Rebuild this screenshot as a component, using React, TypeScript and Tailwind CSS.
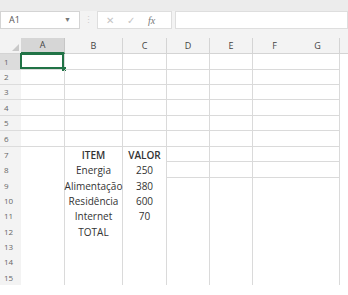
const cols = ['A', 'B', 'C', 'D', 'E', 'F', 'G'];
const colW = [44, 58, 44, 43, 43, 43, 44];
const rowH = [16, 15, 15, 16, 15, 16, 15, 16, 15, 15, 16, 15, 15, 16, 15];

const data: Record<string, { text: string; bold?: boolean }> = {
  B7: { text: 'ITEM', bold: true },
  C7: { text: 'VALOR', bold: true },
  B8: { text: 'Energia' },
  C8: { text: '250' },
  B9: { text: 'Alimentação' },
  C9: { text: '380' },
  B10: { text: 'Residência' },
  C10: { text: '600' },
  B11: { text: 'Internet' },
  C11: { text: '70' },
  B12: { text: 'TOTAL' },
};

function hasBottom(ci: number, row: number): boolean {
  if (ci < 3) return row <= 6;
  return row <= 8;
}

function hasRight(ci: number): boolean {
  // no visible line between F and G
  return ci !== 5;
}

export default function App() {
  return (
    <div className="flex h-[295px] w-[348px] flex-col overflow-hidden bg-[#f3f3f3] font-['Open_Sans',sans-serif] text-[#333]">
      <div className="h-[11px] bg-[#ececec]" />

      {/* formula bar */}
      <div className="flex h-[18px] items-stretch bg-[#f3f3f3]">
        <div className="flex w-[80px] items-center justify-between border border-[#d4d4d4] bg-white pl-[8px] pr-[8px]">
          <span className="text-[9px] text-[#555]">A1</span>
          <span className="text-[7px] text-[#777]">▼</span>
        </div>
        <div className="flex w-[17px] items-center justify-center text-[9px] text-[#cfcfcf]">⋮</div>
        <div className="flex w-[75px] items-center border border-[#dedede] bg-white">
          <span className="ml-[8px] text-[10px] text-[#c4c4c4]">✕</span>
          <span className="ml-[13px] text-[10px] text-[#c4c4c4]">✓</span>
          <span className="ml-[13px] font-['Liberation_Serif',serif] text-[10px] italic text-[#777]">fx</span>
        </div>
        <div className="ml-[3px] flex-1 border border-[#dedede] bg-white" />
      </div>

      <div className="h-[9px] bg-[#f3f3f3]" />

      {/* column headers */}
      <div className="flex h-[16px] bg-[#f3f3f3]">
        <div className="relative w-[21px] border-b border-[#d4d4d4]">
          <div className="absolute bottom-[2px] right-[2px] h-0 w-0 border-b-[7px] border-l-[7px] border-b-[#c9c9c9] border-l-transparent" />
        </div>
        {cols.map((c, i) => (
          <div
            key={c}
            style={{ width: colW[i] }}
            className={
              c === 'A'
                ? 'flex items-center justify-center border-b-2 border-r border-b-[#217346] border-r-[#c6c6c6] bg-[#d6d6d6] text-[9px] text-[#444]'
                : hasRight(i)
                  ? 'flex items-center justify-center border-b border-r border-[#d4d4d4] text-[9px] text-[#444]'
                  : 'flex items-center justify-center border-b border-[#d4d4d4] text-[9px] text-[#444]'
            }
          >
            {c}
          </div>
        ))}
        <div className="flex-1 border-b border-[#d4d4d4]" />
      </div>

      {/* rows */}
      <div className="flex-1 bg-white">
        {rowH.map((h, ri) => {
          const row = ri + 1;
          return (
            <div key={row} className="flex" style={{ height: h }}>
              <div
                className={
                  (row === 1 ? 'bg-[#dcdcdc] ' : 'bg-[#f3f3f3] ') +
                  (row <= 6 ? 'border-b border-[#dcdcdc] ' : '') +
                  'flex w-[21px] items-center pl-[4px] text-[8px] text-[#666]'
                }
              >
                {row}
              </div>
              {cols.map((c, ci) => {
                const key = c + row;
                const cell = data[key];
                return (
                  <div
                    key={key}
                    style={{ width: colW[ci] }}
                    className={
                      (hasBottom(ci, row) ? 'border-b ' : '') +
                      (hasRight(ci) ? 'border-r ' : '') +
                      'relative flex items-center justify-center border-[#dadada] text-[10px] leading-none text-[#333]'
                    }
                  >
                    {cell && <span className={cell.bold ? 'font-semibold' : ''}>{cell.text}</span>}
                    {key === 'A1' && (
                      <>
                        <div className="absolute -left-px -top-px bottom-0 right-0 border-2 border-[#217346]" />
                        <div className="absolute -bottom-[2px] -right-[2px] h-[4px] w-[4px] bg-[#217346]" />
                      </>
                    )}
                  </div>
                );
              })}
              <div className="flex-1" />
            </div>
          );
        })}
      </div>
    </div>
  );
}
